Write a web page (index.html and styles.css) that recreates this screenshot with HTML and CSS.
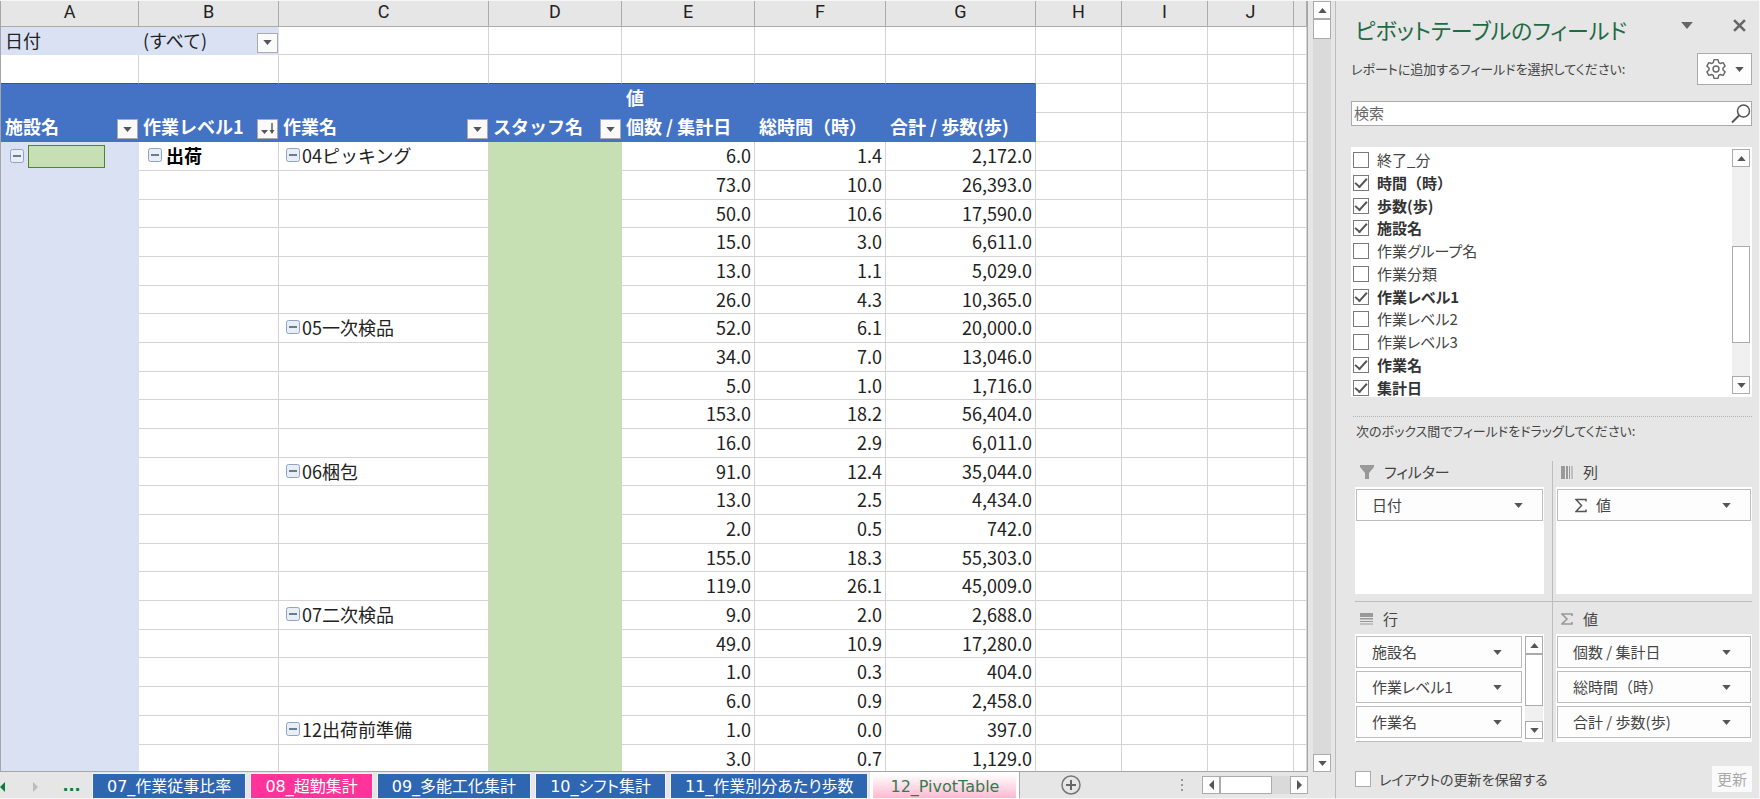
FILE: index.html
```html
<!DOCTYPE html>
<html lang="ja">
<head>
<meta charset="utf-8">
<title>12_PivotTable</title>
<link rel="stylesheet" href="styles.css">
</head>
<body>
<svg class="defs" aria-hidden="true">
  <symbol id="down" viewBox="0 0 10 6"><path d="M0 0h10L5 6z" fill="currentColor"/></symbol>
  <symbol id="up" viewBox="0 0 10 6"><path d="M0 6h10L5 0z" fill="currentColor"/></symbol>
  <symbol id="minus" viewBox="0 0 14 14"><rect x=".5" y=".5" width="13" height="13" rx="2" fill="#e9edf4" stroke="#8fa3c4"/><path d="M3 7h8" stroke="#34496e" stroke-width="1.4"/></symbol>
</svg>
<div class="app">
<main class="book">
  <div class="work">
    <div class="sheet">
      <table class="grid">
        <colgroup><col class="wa"><col class="wb"><col class="wc"><col class="wd"><col class="wd"><col class="wf"><col class="wg"><col class="wh"><col class="wh"><col class="wh"><col></colgroup>
        <thead>
          <tr class="letters"><th>A</th><th>B</th><th>C</th><th>D</th><th>E</th><th>F</th><th>G</th><th>H</th><th>I</th><th>J</th><th></th></tr>
        </thead>
        <tbody class="head">
          <tr class="page"><td class="lav">日付</td><td class="lav"><div class="cell">(すべて)<button class="drop" aria-label="日付フィルター"><svg class="tri"><use href="#down"/></svg></button></div></td><td></td><td></td><td></td><td></td><td></td><td></td><td></td><td></td><td></td></tr>
          <tr class="gap"><td class="edge"></td><td class="edge"></td><td class="edge"></td><td class="edge"></td><td class="edge"></td><td class="edge"></td><td class="edge"></td><td></td><td></td><td></td><td></td></tr>
          <tr class="blue"><th></th><th></th><th></th><th></th><th>値</th><th></th><th></th><td></td><td></td><td></td><td></td></tr>
          <tr class="blue"><th><div class="cell">施設名<button class="drop" aria-label="施設名"><svg class="tri"><use href="#down"/></svg></button></div></th><th><div class="cell">作業レベル1<button class="drop" aria-label="作業レベル1"><svg class="sort" viewBox="0 0 14 12"><path d="M0 7h7L3.500 11z" fill="#555"/><path d="M11 0v10" stroke="#555" stroke-width="1.400"/><path d="M8.500 7h5L11 11z" fill="#555"/></svg></button></div></th><th><div class="cell">作業名<button class="drop" aria-label="作業名"><svg class="tri"><use href="#down"/></svg></button></div></th><th><div class="cell">スタッフ名<button class="drop" aria-label="スタッフ名"><svg class="tri"><use href="#down"/></svg></button></div></th><th>個数 / 集計日</th><th>総時間（時）</th><th>合計 / 歩数(歩)</th><td></td><td></td><td></td><td></td></tr>
        </tbody>
        <tbody class="data">
          <tr><td class="lav fac" rowspan="22"><div class="item"><svg class="minus"><use href="#minus"/></svg><span class="mask"></span></div></td><td><div class="item strong"><svg class="minus"><use href="#minus"/></svg>出荷</div></td><td><div class="item task"><svg class="minus"><use href="#minus"/></svg>04ピッキング</div></td><td class="staff" rowspan="22"></td><td>6.0</td><td>1.4</td><td>2,172.0</td><td></td><td></td><td></td><td></td></tr>
          <tr><td></td><td></td><td>73.0</td><td>10.0</td><td>26,393.0</td><td></td><td></td><td></td><td></td></tr>
          <tr><td></td><td></td><td>50.0</td><td>10.6</td><td>17,590.0</td><td></td><td></td><td></td><td></td></tr>
          <tr><td></td><td></td><td>15.0</td><td>3.0</td><td>6,611.0</td><td></td><td></td><td></td><td></td></tr>
          <tr><td></td><td></td><td>13.0</td><td>1.1</td><td>5,029.0</td><td></td><td></td><td></td><td></td></tr>
          <tr><td></td><td></td><td>26.0</td><td>4.3</td><td>10,365.0</td><td></td><td></td><td></td><td></td></tr>
          <tr><td></td><td><div class="item task"><svg class="minus"><use href="#minus"/></svg>05一次検品</div></td><td>52.0</td><td>6.1</td><td>20,000.0</td><td></td><td></td><td></td><td></td></tr>
          <tr><td></td><td></td><td>34.0</td><td>7.0</td><td>13,046.0</td><td></td><td></td><td></td><td></td></tr>
          <tr><td></td><td></td><td>5.0</td><td>1.0</td><td>1,716.0</td><td></td><td></td><td></td><td></td></tr>
          <tr><td></td><td></td><td>153.0</td><td>18.2</td><td>56,404.0</td><td></td><td></td><td></td><td></td></tr>
          <tr><td></td><td></td><td>16.0</td><td>2.9</td><td>6,011.0</td><td></td><td></td><td></td><td></td></tr>
          <tr><td></td><td><div class="item task"><svg class="minus"><use href="#minus"/></svg>06梱包</div></td><td>91.0</td><td>12.4</td><td>35,044.0</td><td></td><td></td><td></td><td></td></tr>
          <tr><td></td><td></td><td>13.0</td><td>2.5</td><td>4,434.0</td><td></td><td></td><td></td><td></td></tr>
          <tr><td></td><td></td><td>2.0</td><td>0.5</td><td>742.0</td><td></td><td></td><td></td><td></td></tr>
          <tr><td></td><td></td><td>155.0</td><td>18.3</td><td>55,303.0</td><td></td><td></td><td></td><td></td></tr>
          <tr><td></td><td></td><td>119.0</td><td>26.1</td><td>45,009.0</td><td></td><td></td><td></td><td></td></tr>
          <tr><td></td><td><div class="item task"><svg class="minus"><use href="#minus"/></svg>07二次検品</div></td><td>9.0</td><td>2.0</td><td>2,688.0</td><td></td><td></td><td></td><td></td></tr>
          <tr><td></td><td></td><td>49.0</td><td>10.9</td><td>17,280.0</td><td></td><td></td><td></td><td></td></tr>
          <tr><td></td><td></td><td>1.0</td><td>0.3</td><td>404.0</td><td></td><td></td><td></td><td></td></tr>
          <tr><td></td><td></td><td>6.0</td><td>0.9</td><td>2,458.0</td><td></td><td></td><td></td><td></td></tr>
          <tr><td></td><td><div class="item task"><svg class="minus"><use href="#minus"/></svg>12出荷前準備</div></td><td>1.0</td><td>0.0</td><td>397.0</td><td></td><td></td><td></td><td></td></tr>
          <tr><td></td><td></td><td>3.0</td><td>0.7</td><td>1,129.0</td><td></td><td></td><td></td><td></td></tr>
        </tbody>
      </table>
    </div>
    <div class="vbar">
      <button class="arrow" aria-label="上へ"><svg class="tri"><use href="#up"/></svg></button>
      <div class="thumb"></div>
      <button class="arrow last" aria-label="下へ"><svg class="tri"><use href="#down"/></svg></button>
    </div>
  </div>
  <nav class="tabs">
    <button class="step on" aria-label="前のシート"><svg viewBox="0 0 5 10" width="5" height="10"><path d="M5 0v10L0 5z" fill="currentColor"/></svg></button>
    <button class="step next" aria-label="次のシート"><svg viewBox="0 0 5 10" width="5" height="10"><path d="M0 0v10l5-5z" fill="currentColor"/></svg></button>
    <button class="more">...</button>
    <button class="tab">07_作業従事比率</button>
    <button class="tab pink">08_超勤集計</button>
    <button class="tab">09_多能工化集計</button>
    <button class="tab">10_シフト集計</button>
    <button class="tab">11_作業別分あたり歩数</button>
    <div class="current"><button class="open">12_PivotTable</button></div>
    <div class="rest">
      <button class="add" aria-label="新しいシート"><svg viewBox="0 0 20 20" width="20" height="20"><circle cx="10" cy="10" r="9" fill="none" stroke="#777" stroke-width="1.500"/><path d="M10 5v10M5 10h10" stroke="#666" stroke-width="2"/></svg></button>
      <svg class="dots" viewBox="0 0 3 13" width="3" height="13"><path d="M0 0h2v2H0zM0 5h2v2H0zM0 10h2v2H0z" fill="#999"/></svg>
      <div class="hbar">
        <button class="arrow" aria-label="左へ"><svg viewBox="0 0 5 10" width="5" height="10"><path d="M5 0v10L0 5z" fill="#555"/></svg></button>
        <div class="hthumb"></div>
        <button class="arrow last" aria-label="右へ"><svg viewBox="0 0 5 10" width="5" height="10"><path d="M0 0v10l5-5z" fill="#555"/></svg></button>
      </div>
    </div>
  </nav>
</main>
<aside class="pane">
  <header class="top">
    <h1>ピボットテーブルのフィールド</h1>
    <button class="bare" aria-label="オプション"><svg class="caret"><use href="#down"/></svg></button>
    <button class="bare" aria-label="閉じる"><svg viewBox="0 0 12 12" width="13" height="13"><path d="M1 1l10 10M11 1L1 11" stroke="#666" stroke-width="2.400"/></svg></button>
  </header>
  <div class="intro">
    <p>レポートに追加するフィールドを選択してください:</p>
    <button class="gear" aria-label="ツール"><svg viewBox="0 0 20 20" width="22" height="22"><path d="M7.500 4.200L8.200 1.500h3.600l.7 2.700 1.300.8 2.700-.8 1.800 3.100-2 2v1.400l2 2-1.800 3.100-2.700-.8-1.300.8-.7 2.700H8.200l-.7-2.700-1.300-.8-2.700.8-1.800-3.100 2-2V9.300l-2-2 1.800-3.100 2.700.8z" fill="none" stroke="#666" stroke-width="1.300" stroke-linejoin="round"/><circle cx="10" cy="10" r="2.700" fill="none" stroke="#666" stroke-width="1.300"/></svg><svg class="tri"><use href="#down"/></svg></button>
  </div>
  <label class="search"><input type="text" placeholder="検索" aria-label="検索"><svg viewBox="0 0 20 20" width="20" height="20"><circle cx="12.500" cy="7" r="6" fill="none" stroke="#555" stroke-width="1.500"/><path d="M8.300 11.300L1 18.500" stroke="#555" stroke-width="1.900"/></svg></label>
  <div class="fields">
    <div class="checks">
      <label><input type="checkbox"><span>終了_分</span></label>
      <label><input type="checkbox" checked><span class="full">時間（時）</span></label>
      <label><input type="checkbox" checked><span class="full">歩数(歩)</span></label>
      <label><input type="checkbox" checked><span>施設名</span></label>
      <label><input type="checkbox"><span>作業グループ名</span></label>
      <label><input type="checkbox"><span>作業分類</span></label>
      <label><input type="checkbox" checked><span>作業レベル1</span></label>
      <label><input type="checkbox"><span>作業レベル2</span></label>
      <label><input type="checkbox"><span>作業レベル3</span></label>
      <label><input type="checkbox" checked><span>作業名</span></label>
      <label><input type="checkbox" checked><span>集計日</span></label>
    </div>
    <div class="fbar">
      <button class="arrow" aria-label="上へ"><svg class="tri"><use href="#up"/></svg></button>
      <div class="fthumb"></div>
      <button class="arrow last" aria-label="下へ"><svg class="tri"><use href="#down"/></svg></button>
    </div>
  </div>
  <p class="hint">次のボックス間でフィールドをドラッグしてください:</p>
  <div class="areas">
    <section class="area left upper">
      <h2><svg viewBox="0 0 14 14" width="14" height="14"><path d="M0 0h14v2L9 8v6H5V8L0 2z" fill="#999"/></svg>フィルター</h2>
      <div class="box"><div class="pills"><button class="pill">日付<svg class="tri"><use href="#down"/></svg></button></div></div>
    </section>
    <section class="area right upper">
      <h2><svg viewBox="0 0 12 13" width="12" height="13"><path d="M0 0h4v13H0zM5 0h2v13H5zM8 0h1v13H8zM10.500 0h1v13h-1z" fill="#999"/></svg>列</h2>
      <div class="box"><div class="pills"><button class="pill"><span class="lead"><svg viewBox="0 0 12 14" width="12" height="15"><path d="M11 3V1H1l5.500 6L1 13h10v-2" fill="none" stroke="#555" stroke-width="1.500"/></svg>値</span><svg class="tri"><use href="#down"/></svg></button></div></div>
    </section>
    <section class="area left lower">
      <h2><svg viewBox="0 0 13 12" width="13" height="12"><path d="M0 0h13v4H0zM0 5h13v1.500H0zM0 8h13v1H0zM0 10.500h13v1H0z" fill="#999"/></svg>行</h2>
      <div class="box"><div class="pills"><button class="pill">施設名<svg class="tri"><use href="#down"/></svg></button><button class="pill">作業レベル1<svg class="tri"><use href="#down"/></svg></button><button class="pill">作業名<svg class="tri"><use href="#down"/></svg></button><div class="peek"></div></div>
        <div class="bbar">
          <button class="arrow" aria-label="上へ"><svg class="tri"><use href="#up"/></svg></button>
          <div class="bthumb"></div>
          <button class="arrow last" aria-label="下へ"><svg class="tri"><use href="#down"/></svg></button>
        </div>
      </div>
    </section>
    <section class="area right lower">
      <h2><svg viewBox="0 0 12 12" width="12" height="12"><path d="M11 3V1H1l5 5-5 5h10V9" fill="none" stroke="#999" stroke-width="1.600"/></svg>値</h2>
      <div class="box"><div class="pills full"><button class="pill">個数 / 集計日<svg class="tri"><use href="#down"/></svg></button><button class="pill">総時間（時）<svg class="tri"><use href="#down"/></svg></button><button class="pill">合計 / 歩数(歩)<svg class="tri"><use href="#down"/></svg></button></div></div>
    </section>
  </div>
  <footer class="foot">
    <label><input type="checkbox"><span>レイアウトの更新を保留する</span></label>
    <button class="update" disabled>更新</button>
  </footer>
</aside>
</div>
</body>
</html>
```
FILE: styles.css
```css
* { box-sizing: border-box; }
body {
  margin: 0;
  background: #e6e6e6;
  color: #222;
  font-family: "Noto Sans CJK JP", sans-serif;
  font-size: 18px;
}
button { margin: 0; padding: 0; border: 0; background: none; font: inherit; color: inherit; font-feature-settings: inherit; }
svg { display: block; flex: none; }
h1, h2, p { margin: 0; font-weight: 400; }
.defs { position: absolute; width: 0; height: 0; }
.tri { width: 9px; height: 5px; color: #555; }
.app {
  display: flex;
  height: 100vh;
  border: solid #f6f6f6;
  border-width: 1px 1px 1px 0;
}

/* Workbook */
.book { flex: 1; min-width: 0; display: flex; flex-direction: column; }
.work { flex: 1; min-height: 0; display: flex; gap: 5px; }
.sheet {
  flex: 1;
  min-width: 0;
  overflow: hidden;
  background: #fff;
  border: solid #a6a6a6;
  border-width: 0 1px 1px 1px;
}
.grid { width: 100%; table-layout: fixed; border-collapse: separate; border-spacing: 0; line-height: 24px; }
.wa { width: 138px; }
.wb { width: 140px; }
.wc { width: 210px; }
.wd { width: 133px; }
.wf { width: 131px; }
.wg { width: 150px; }
.wh { width: 86px; }
.grid td, .grid th {
  height: 29px;
  padding: 0 0 2px;
  border: solid #d4d4d4;
  border-width: 0 1px 1px 0;
  white-space: nowrap;
  text-align: left;
}
.grid .letters th {
  height: 26px;
  padding-bottom: 4px;
  background: #e6e6e6;
  border-color: #ababab;
  font-family: Roboto, sans-serif;
  font-weight: 400;
  line-height: 20px;
  text-align: center;
}
.grid .page td { height: 28px; padding-left: 4px; }
.grid .lav { background: #d9e1f2; border-color: #d9e1f2; }
.grid .edge { border-bottom-color: #2f5597; }
.grid .blue th { padding-left: 4px; background: #4472c4; border-color: #4472c4; color: #fff; font-weight: 700; }
.cell { display: flex; justify-content: space-between; align-items: center; height: 24px; }
.drop {
  display: grid;
  place-items: center;
  width: 21px;
  height: 20px;
  margin-top: 6px;
  background: #fafafa;
  border: 1px solid #ababab;
}
.sort { width: 14px; height: 12px; }
.data tr:nth-child(3n) td { height: 28px; }
.data tr:nth-child(21) td { height: 29px; }
.grid .data td { padding-right: 3px; text-align: right; }
.grid .data .fac { vertical-align: top; padding: 2px 0 0; }
.grid .data .staff { background: #c6e0b4; border-color: #c6e0b4; }
.item { display: flex; align-items: center; gap: 4px; padding-left: 9px; }
.fac .item { height: 24px; }
.strong { font-weight: 700; color: #000; }
.task { gap: 2px; padding-left: 7px; }
.minus { width: 14px; height: 14px; }
.mask { width: 77px; height: 23px; background: #c6e0b4; border: 1px solid #548235; }

/* Scroll bars */
.arrow {
  display: grid;
  place-items: center;
  width: 18px;
  height: 18px;
  background: #fdfdfd;
  border: 1px solid #ababab;
}
.vbar, .fbar, .bbar { display: flex; flex-direction: column; width: 18px; background: #dadada; }
.vbar .last, .fbar .last, .bbar .last { margin-top: auto; }
.thumb, .fthumb, .bthumb, .hthumb { background: #fff; border: 1px solid #ababab; }
.thumb { height: 20px; }
.fbar, .bbar { background: #f0f0f0; }
.fthumb { height: 97px; margin-top: 79px; }
.bthumb { height: 52px; }

/* Sheet tabs */
.tabs {
  display: flex;
  flex: none;
  height: 26px;
  font: 16px "DejaVu Sans", "Noto Sans CJK JP", sans-serif;
  font-feature-settings: "palt";
}
.step { width: 19px; color: #bbb; padding-top: 4px; }
.step.on { color: #107c41; }
.step.next { width: 28px; padding-left: 14px; }
.more { width: 43px; padding-left: 6px; color: #107c41; font-weight: 700; }
.tab {
  margin: 2px 3px 0;
  padding: 2px 14px 0;
  height: 24px;
  background: #2e66b1;
  color: #fff;
  line-height: 22px;
  white-space: nowrap;
  outline: 1px solid #f2f2f2;
}
.pink { background: #ff3399; }
.current { padding: 2px 3px 0; background: #fff; border-right: 1px solid #ababab; }
.open {
  height: 24px;
  padding: 2px 17px 0;
  background: linear-gradient(#fff, #ffb9d0);
  color: #2f7d4f;
  line-height: 22px;
}
.rest { flex: 1; display: flex; align-items: center; padding-right: 23px; }
.add { margin-left: 41px; }
.dots { margin-left: auto; margin-right: 18px; }
.hbar { display: flex; width: 106px; background: #dadada; }
.hthumb { width: 52px; }
.hbar .last { margin-left: auto; }

/* Field list pane */
.pane {
  flex: none;
  width: 424px;
  display: flex;
  flex-direction: column;
  margin-left: 4px;
  padding: 0 7px 6px 15px;
  border-left: 1px solid #bdbdbd;
  color: #444;
  font-size: 15px;
  line-height: 22px;
  font-feature-settings: "palt";
}
.full { font-feature-settings: normal; }
.top { display: flex; align-items: center; height: 50px; padding: 6px 6px 0 4px; gap: 40px; }
.top h1 { margin-right: auto; color: #1e6b44; font-size: 22px; line-height: 34px; white-space: nowrap; }
.bare { margin-bottom: 8px; }
.caret { width: 12px; height: 7px; color: #666; }
.intro { display: flex; justify-content: space-between; align-items: center; height: 36px; }
.intro p, .hint { white-space: nowrap; font-size: 13px; }
.gear {
  display: flex;
  align-items: center;
  justify-content: center;
  gap: 8px;
  width: 55px;
  height: 32px;
  background: #fdfdfd;
  border: 1px solid #ababab;
}
.search {
  display: flex;
  align-items: center;
  height: 25px;
  margin-top: 14px;
  background: #fff;
  border: 1px solid #ababab;
}
.search input { flex: 1; min-width: 0; height: 22px; padding: 0 0 3px 2px; border: 0; outline: 0; background: none; font: inherit; line-height: 20px; }
.search input::placeholder { color: #666; opacity: 1; }
.fields { display: flex; margin-top: 21px; height: 250px; padding: 1px 2px 0; background: #fff; }
.checks { flex: 1; }
.checks label { display: flex; align-items: center; gap: 8px; height: 23px; }
.checks label:nth-child(4n) { height: 22px; }
.fbar { height: 245px; margin-top: 1px; }
input[type="checkbox"] {
  appearance: none;
  flex: none;
  width: 16px;
  height: 16px;
  margin: 0;
  border: 1px solid #7a7a7a;
  background: #fff;
  display: grid;
  place-items: center;
}
input[type="checkbox"]:checked::before {
  content: "";
  width: 10px;
  height: 5px;
  margin-bottom: 3px;
  border: solid #555;
  border-width: 0 0 2px 2px;
  transform: rotate(-48deg);
}
input:checked + span { font-weight: 700; color: #333; }
.hint { margin: 19px 0 0 2px; padding: 3px 0 0 3px; border-top: 1px dotted #b5b5b5; }
.areas { display: grid; grid-template-columns: 198fr 199fr; margin: 19px 0 0 4px; }
.area.left { border-right: 1px solid #bdbdbd; padding-right: 8px; }
.area.right { padding-left: 3px; }
.upper { padding-bottom: 7px; }
.lower { border-top: 1px solid #bdbdbd; padding-top: 6px; }
.area h2 { display: flex; align-items: center; gap: 10px; height: 26px; padding: 0 0 4px 5px; font-size: 15px; }
.box { display: flex; gap: 3px; height: 108px; padding: 2px 1px 0; background: #fff; overflow: hidden; }
.upper .box { height: 107px; }
.pills { flex: 1; display: flex; flex-direction: column; gap: 3px; }
.pill {
  display: flex;
  flex: none;
  align-items: center;
  justify-content: space-between;
  height: 32px;
  padding: 0 19px 0 15px;
  background: #fdfdfd;
  border: 1px solid #bdbdbd;
}
.lead { display: flex; align-items: center; gap: 9px; padding-left: 2px; }
.peek { height: 2px; border-top: 1px solid #bdbdbd; }
.bbar { height: 103px; }
.foot { display: flex; align-items: center; justify-content: space-between; margin: auto 0 0 4px; }
.foot label { display: flex; align-items: center; gap: 8px; font-size: 14px; }
.foot input[type="checkbox"] { border-color: #ababab; }
.update { width: 40px; height: 26px; background: #fafafa; color: #aaa; }
```
